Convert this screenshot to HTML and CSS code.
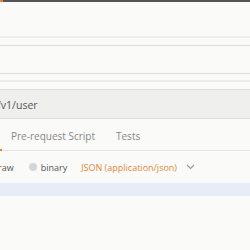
FILE: index.html
```html
<!DOCTYPE html>
<html lang="en">
<head>
    <meta charset="UTF-8">
    <title>Request builder</title>
    <link rel="stylesheet" href="styles.css">
</head>
<body>
    <div class="topbar"><span class="topbar-accent"></span></div>
    <div class="blank blank-top"></div>
    <div class="band"></div>
    <div class="blank blank-gap"></div>
    <div class="panel"></div>
    <div class="blank blank-small"></div>
    <div class="band"></div>
    <div class="blank blank-gap"></div>

    <div class="url-bar">
        <span class="url-text">/v1/user</span>
    </div>

    <nav class="tabs">
        <span class="tab-marker"></span>
        <span class="tab">Pre-request Script</span>
        <span class="tab">Tests</span>
    </nav>

    <div class="body-types">
        <span class="type type-raw">raw</span>
        <span class="type"><span class="radio"></span>binary</span>
        <span class="type type-json">JSON (application/json)</span>
        <svg class="chevron" width="9" height="6" viewBox="0 0 9 6">
            <path d="M1 1 L4.5 4.5 L8 1" fill="none" stroke="#999" stroke-width="1.1"/>
        </svg>
    </div>
    <div class="editor-line"></div>
</body>
</html>
```

FILE: styles.css
```css
body {
    margin: 0;
    background-color: #fafaf8;
    font-family: "Open Sans", sans-serif;
    font-size: 10px;
    color: #555;
    overflow: hidden;
}
.topbar {
    height: 2px;
    background-color: #555;
    display: flex;
}
.topbar-accent {
    width: 3px;
    background-color: #e0883a;
}
.blank-top {
    height: 34px;
}
.blank-gap {
    height: 7px;
}
.blank-small {
    height: 6px;
}
.band {
    height: 2px;
    background-color: #ececea;
}
.panel {
    height: 27px;
    border-top: 1px solid #ddd;
    border-bottom: 1px solid #ddd;
}
.url-bar {
    height: 28px;
    background-color: #efefee;
    border-top: 1px solid #ddd;
    border-bottom: 1px solid #ddd;
    display: flex;
    align-items: center;
    overflow: hidden;
}
.url-text {
    margin-left: -3px;
    padding-top: 1px;
    font-size: 10.5px;
    color: #555;
}
.tabs {
    padding-top: 3px;
    box-sizing: border-box;
    height: 32px;
    border-bottom: 1px solid #e4e4e4;
    display: flex;
    align-items: center;
    gap: 21px;
    padding-left: 11px;
    position: relative;
    font-size: 10px;
}
.tab {
    color: #888;
}
.tab-marker {
    position: absolute;
    left: 0;
    bottom: -1px;
    width: 2px;
    height: 2px;
    background-color: #e0883a;
}
.body-types {
    height: 32px;
    display: flex;
    align-items: center;
    overflow: hidden;
    font-size: 9px;
}
.type {
    display: flex;
    align-items: center;
    gap: 4px;
    margin-right: 14px;
}
.type-raw {
    margin-left: -2px;
    margin-right: 15px;
}
.radio {
    width: 8px;
    height: 8px;
    border-radius: 50%;
    background-color: #d6d6d6;
}
.type-json {
    color: #e0883a;
    margin-right: 9px;
}
.editor-line {
    height: 13px;
    background-color: #e6edf7;
}
```
